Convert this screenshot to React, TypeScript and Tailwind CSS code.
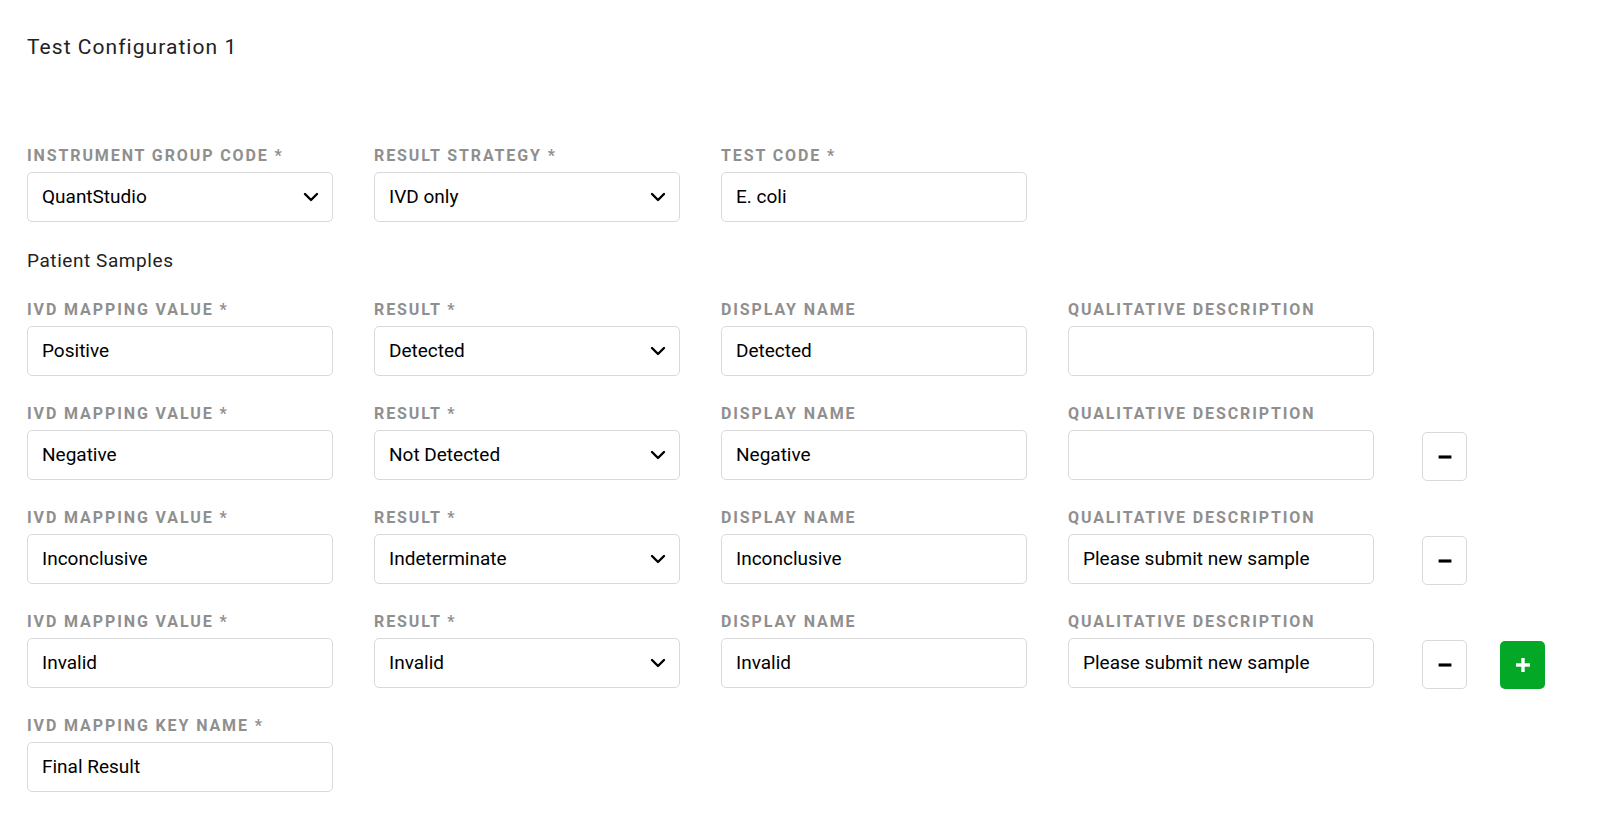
import { Minus, Plus } from 'lucide-react';

type Row = {
  value: string;
  result: string;
  display: string;
  description: string;
  removable: boolean;
};

const rows: Row[] = [
  { value: 'Positive', result: 'Detected', display: 'Detected', description: '', removable: false },
  { value: 'Negative', result: 'Not Detected', display: 'Negative', description: '', removable: true },
  { value: 'Inconclusive', result: 'Indeterminate', display: 'Inconclusive', description: 'Please submit new sample', removable: true },
  { value: 'Invalid', result: 'Invalid', display: 'Invalid', description: 'Please submit new sample', removable: true },
];

function Chevron() {
  return (
    <svg width="16" height="10" viewBox="0 0 16 10" fill="none" className="shrink-0">
      <path d="M2 2l6 6 6-6" stroke="#000" strokeWidth="2.4" strokeLinecap="round" strokeLinejoin="round" />
    </svg>
  );
}

function Field({ label, value, select }: { label: string; value: string; select?: boolean }) {
  return (
    <div className="flex w-[306px] flex-col">
      <div className="h-[18px] text-[16px] leading-[18px] font-bold uppercase tracking-[0.118em] text-[#8f8f8f] whitespace-nowrap">
        {label}
      </div>
      <div className="mt-[7px] flex h-[50px] items-center justify-between rounded-[5px] border border-[#d9d9d9] bg-white pl-[14px] pr-[13px]">
        <span className="text-[19px] text-black">{value}</span>
        {select && <Chevron />}
      </div>
    </div>
  );
}

export default function App() {
  return (
    <div className="min-h-screen bg-white pl-[27px] pt-[33px] font-['Roboto',sans-serif]">
      {/* Header */}
      <h1 className="text-[21px] leading-[28px] tracking-[0.05em] text-[#222]">Test Configuration 1</h1>

      <div className="mt-[86px] flex gap-[41px]">
        <Field label="Instrument Group Code *" value="QuantStudio" select />
        <Field label="Result Strategy *" value="IVD only" select />
        <Field label="Test Code *" value="E. coli" />
      </div>

      <h2 className="mt-[27px] text-[19px] leading-[24px] tracking-[0.03em] text-[#222]">Patient Samples</h2>

      <div className="mt-[28px] flex flex-col gap-[29px]">
        {rows.map((r, i) => (
          <div key={i} className="flex items-end">
            <div className="flex gap-[41px]">
              <Field label="IVD Mapping Value *" value={r.value} />
              <Field label="Result *" value={r.result} select />
              <Field label="Display Name" value={r.display} />
              <Field label="Qualitative Description" value={r.description} />
            </div>
            {r.removable && (
              <button className="mb-[-1px] ml-[48px] flex h-[49px] w-[45px] items-center justify-center rounded-[5px] border border-[#d9d9d9] bg-white">
                <Minus className="h-[22px] w-[22px] text-black" strokeWidth={3.4} strokeLinecap="butt" />
              </button>
            )}
            {i === rows.length - 1 && (
              <button className="mb-[-1px] ml-[33px] flex h-[48px] w-[45px] items-center justify-center rounded-[5px] bg-[#03a827]">
                <Plus className="h-[24px] w-[24px] text-white" strokeWidth={3.4} strokeLinecap="butt" />
              </button>
            )}
          </div>
        ))}

        <div className="flex">
          <Field label="IVD Mapping Key Name *" value="Final Result" />
        </div>
      </div>
    </div>
  );
}
